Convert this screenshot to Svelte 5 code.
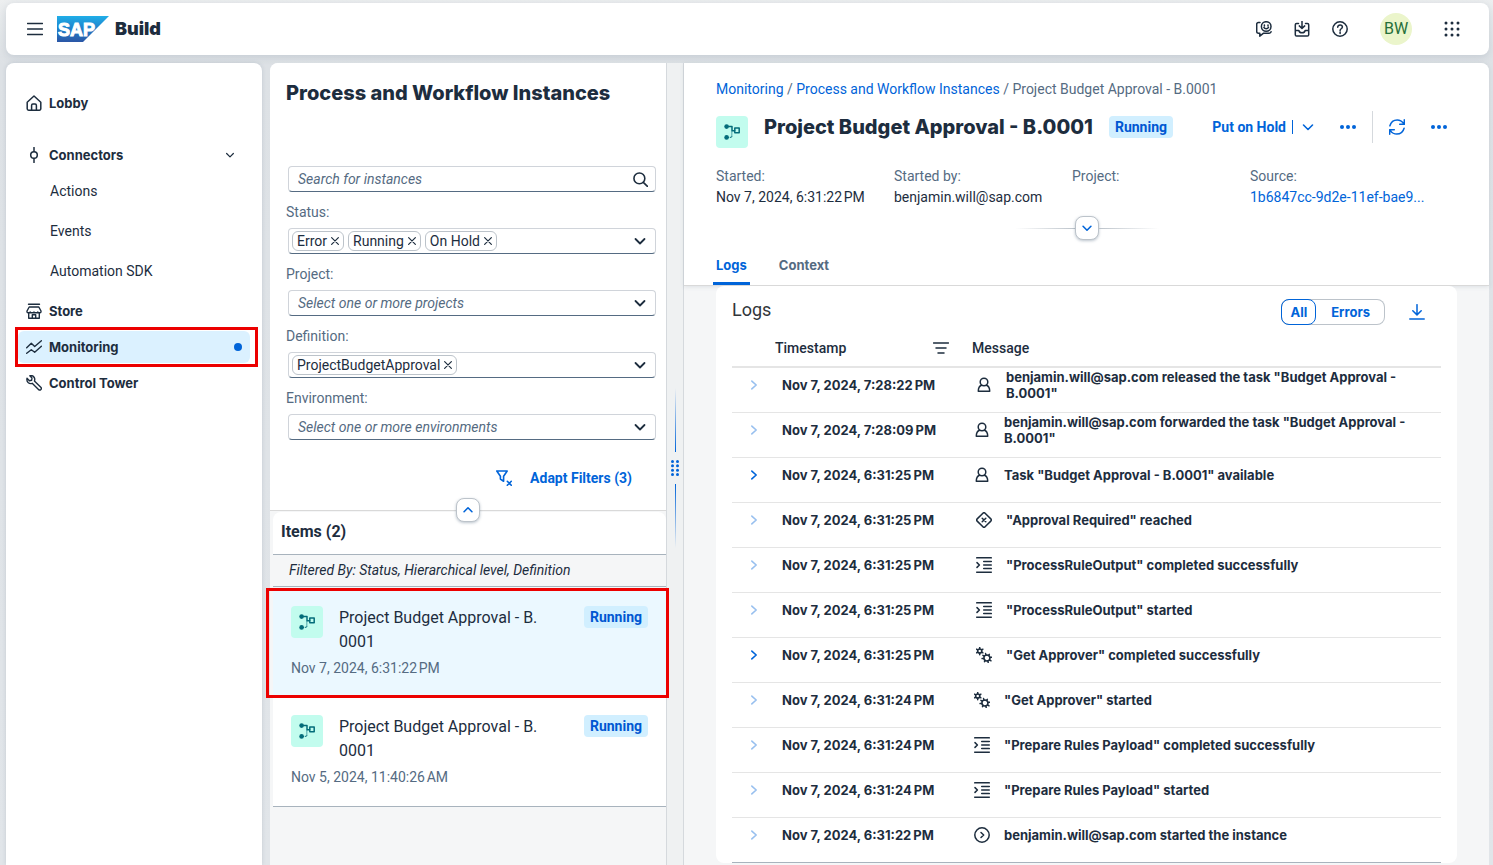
<script>
  const icons = {
    menu: '<path d="M0.5 2.5h15M0.5 8h15M0.5 13.5h15"/>',
    home: '<path d="M1.2 7.2 8 1l6.8 6.2v6.6a1.4 1.4 0 0 1-1.4 1.4H2.6a1.4 1.4 0 0 1-1.4-1.4z"/><path d="M5.6 15v-4.6c0-.8.5-1.3 1.3-1.3h2.2c.8 0 1.3.5 1.3 1.3V15"/>',
    connector: '<circle cx="8" cy="8" r="3.3"/><path d="M8 .5v4M8 11.5v4"/>',
    store: '<path d="M2.5 1.2h11M3.2 4h9.6l2.2 4v.8a1 1 0 0 1-1 1h-1.2a1 1 0 0 1-1-.8 1 1 0 0 1-1 .8H9.1a1 1 0 0 1-1.1-.8 1 1 0 0 1-1 .8H5.200a1 1 0 0 1-1-.8 1 1 0 0 1-1 .8H2a1 1 0 0 1-1-1V8zM2.700 10v5.200h10.600V10M6.300 15v-3.200h3.400V15"/>',
    monitor: '<path d="M.7 8.800 5.300 4.300l3.400 3.200L15.400 1.700M.7 14.300l4.600-3.600 3.400 2.600 6.700-6"/>',
    wrench: '<path d="M1 3.300 3.400 5.700 5.600 5.300 6 3 3.800.8C5.600.3 7.500 1 8.300 2.600c.6 1.200.6 2.300.1 3.400l6.400 6.200c.7.7.7 1.600.1 2.300-.7.700-1.700.7-2.400 0L6.200 8.300C4.800 8.900 3.300 8.600 2.100 7.500 1 6.400.7 4.800 1 3.300z"/>',
    down: '<path d="M3.500 6 8 10.500 12.500 6"/>',
    up: '<path d="M3.500 10 8 5.500 12.500 10"/>',
    right: '<path d="M5.500 3.500 10.500 8l-5 4.500"/>',
    chat: '<path d="M4 1.600H2.400c-1 0-1.700.7-1.700 1.700v7.200c0 1 .7 1.700 1.700 1.700h1.400v3l3.800-3h5.600c1 0 1.700-.6 1.900-1.500"/><circle cx="10.200" cy="5.500" r="4.800"/><path d="M7.900 6.400c.9 1.800 3.700 1.800 4.600 0M8.400 4.100v.8M12 4.100v.8"/>',
    inbox: '<path d="M4.500 2.500H2.600c-.8 0-1.300.5-1.300 1.300v10c0 .8.5 1.300 1.300 1.300h10.800c.8 0 1.300-.5 1.300-1.300v-10c0-.8-.5-1.300-1.300-1.300h-1.900M8 .3v7M5.300 4.900 8 7.500l2.700-2.600M1.500 9.500h3.300c.4 1.500 1.500 2.300 3.200 2.300s2.800-.8 3.200-2.300h3.300"/>',
    help: '<circle cx="8" cy="8" r="7.200"/><path d="M5.700 6.200c0-3.100 4.700-3 4.700-.1 0 1.700-2.300 1.600-2.300 3.300M8.100 11v1.500"/>',
    search: '<circle cx="6.800" cy="6.800" r="5.800"/><path d="m11 11 4.500 4.500"/>',
    close: '<path d="m3.500 3.500 9 9M12.500 3.500l-9 9"/>',
    filterx: '<path d="M.8 1h10.400L7.600 6.300v5L4.400 9V6.300z"/><path d="m11.300 11.300 4 4M15.300 11.300l-4 4"/>',
    sort: '<path d="M.5 3h15M3 8h10M5 13h6"/>',
    refresh: '<path d="M.9 6.800C2 2.900 4.900.9 8.200.9c2.600 0 4.800 1.200 6.400 3.500M15.100 9.200c-1.100 3.900-4 5.900-7.300 5.900-2.600 0-4.800-1.200-6.400-3.500M15.300.8v4.500h-4.600M.7 15.200v-4.500h4.600"/>',
    download: '<path d="M8 .7v9.800M3.800 6.700 8 10.900l4.200-4.200M.8 15h14.400"/>',
    person: '<circle cx="8" cy="5" r="3.800"/><path d="M5.600 8.300C3.300 9 2.300 10.800 2.300 14.300h11.400c0-3.500-1-5.300-3.300-6"/>',
    decision: '<path d="M6.900 1.200 1.200 6.900c-.7.7-.7 1.500 0 2.200l5.700 5.700c.7.7 1.500.7 2.200 0l5.700-5.700c.7-.7.700-1.500 0-2.200L9.100 1.200c-.7-.7-1.500-.7-2.200 0z"/><path d="m6.200 6.200 3.600 3.600M9.800 6.200 6.200 9.800"/>',
    script: '<path d="M.7.800h14.600M7.700 4.400h7.600M7.700 8h7.600M7.700 11.600h7.600M.7 15.200h14.600M1 5.600 3.400 8 1 10.400"/>',
    gears: '<circle cx="3.700" cy="4" r="2.100"/><path d="M3.700.3v1.600M3.700 6.100v1.600M.5 2.200l1.400.8M5.500 5l1.400.8M.5 5.800 1.900 5M5.500 3l1.400-.8" /><circle cx="10.900" cy="11" r="3"/><path d="M9.600 6.600l.4 1.600M11.800 13.800l.4 1.700M13.300 7.400l-.9 1.200M9.400 13.400l-.9 1.200M15.700 10.300l-1.700.3M7.800 11.400l-1.700.2M15 13.800l-1.500-.9M8.300 9.100 6.900 8.300"/>',
    start: '<circle cx="8" cy="8" r="7.200"/><path d="m7 5.500 2.700 2.500L7 10.500"/>',
    workflow: '<g fill="currentColor" stroke="none"><circle cx="2.600" cy="2.600" r="2.300"/><circle cx="2.600" cy="13.400" r="2.300"/></g><path d="M3 2.600h5v4.200h3M10.800 4h4.400v4.800h-4.400z"/><path d="M4 13.400h3.800V7.500" stroke-dasharray="1.200 1" stroke-linecap="butt" stroke-width="1.200"/>'
  };

  const connectors = ['Actions', 'Events', 'Automation SDK'];

  let filters = $state([
    { id: 'status', label: 'Status:', tokens: ['Error', 'Running', 'On Hold'], hint: '' },
    { id: 'project', label: 'Project:', tokens: [], hint: 'Select one or more projects' },
    { id: 'definition', label: 'Definition:', tokens: ['ProjectBudgetApproval'], hint: '' },
    { id: 'environment', label: 'Environment:', tokens: [], hint: 'Select one or more environments' }
  ]);

  const removeToken = (filter, token) => {
    filter.tokens = filter.tokens.filter((t) => t !== token);
  };

  const instances = [
    { name: ['Project Budget Approval - B.', '0001'], date: 'Nov 7, 2024, 6:31:22\u202fPM', status: 'Running' },
    { name: ['Project Budget Approval - B.', '0001'], date: 'Nov 5, 2024, 11:40:26\u202fAM', status: 'Running' }
  ];
  let selected = $state(0);

  const logs = [
    { time: '7:28:22', icon: 'person', inset: true, text: 'benjamin.will@sap.com released the task "Budget Approval - B.0001"' },
    { time: '7:28:09', icon: 'person', text: 'benjamin.will@sap.com forwarded the task "Budget Approval - B.0001"' },
    { time: '6:31:25', icon: 'person', open: true, text: 'Task "Budget Approval - B.0001" available' },
    { time: '6:31:25', icon: 'decision', inset: true, text: '"Approval Required" reached' },
    { time: '6:31:25', icon: 'script', inset: true, text: '"ProcessRuleOutput" completed successfully' },
    { time: '6:31:25', icon: 'script', inset: true, text: '"ProcessRuleOutput" started' },
    { time: '6:31:25', icon: 'gears', inset: true, open: true, text: '"Get Approver" completed successfully' },
    { time: '6:31:24', icon: 'gears', text: '"Get Approver" started' },
    { time: '6:31:24', icon: 'script', text: '"Prepare Rules Payload" completed successfully' },
    { time: '6:31:24', icon: 'script', text: '"Prepare Rules Payload" started' },
    { time: '6:31:22', icon: 'start', text: 'benjamin.will@sap.com started the instance' }
  ];
</script>

{#snippet icon(name, size = 16, weight = 1.5)}
  <svg width={size} height={size} viewBox="0 0 16 16" fill="none" stroke="currentColor" stroke-width={weight} stroke-linecap="round" stroke-linejoin="round" aria-hidden="true">{@html icons[name]}</svg>
{/snippet}

{#snippet dots()}
  <svg width="16" height="16" viewBox="0 0 16 16" fill="currentColor" aria-hidden="true"><circle cx="2" cy="8" r="2" /><circle cx="8" cy="8" r="2" /><circle cx="14" cy="8" r="2" /></svg>
{/snippet}

<div class="page">
  <header class="shell">
    <button class="plain" aria-label="Menu">{@render icon('menu', 16)}</button>
    <a class="brand" href="#home" aria-label="SAP Build">
      <svg class="logo" width="52" height="26" viewBox="0 0 52 26" aria-hidden="true">
        <defs>
          <linearGradient id="sap" x1="0" y1="0" x2="0" y2="1">
            <stop offset="0" stop-color="#20aee8" />
            <stop offset="0.5" stop-color="#1f7fca" />
            <stop offset="1" stop-color="#2b56a6" />
          </linearGradient>
        </defs>
        <path d="M0 0h52L26 26H0z" fill="url(#sap)" />
        <text x="1" y="20" class="sap">SAP</text>
      </svg>
      <span>Build</span>
    </a>
    <div class="tools">
      <button class="plain" aria-label="Feedback">{@render icon('chat')}</button>
      <button class="plain" aria-label="Inbox">{@render icon('inbox')}</button>
      <button class="plain" aria-label="Help">{@render icon('help')}</button>
    </div>
    <button class="avatar">BW</button>
    <button class="plain" aria-label="Products">
      <svg width="16" height="16" viewBox="0 0 16 16" fill="currentColor" aria-hidden="true">
        {#each [2, 8, 14] as y}{#each [2, 8, 14] as x}<circle cx={x} cy={y} r="1.500" />{/each}{/each}
      </svg>
    </button>
  </header>

  <div class="body">
    <nav class="side" aria-label="Main">
      <a class="item lobby" href="#lobby">{@render icon('home')}<span>Lobby</span></a>
      <a class="item" href="#connectors">{@render icon('connector', 16, 1.5)}<span>Connectors</span><i class="end">{@render icon('down', 12, 1.6)}</i></a>
      <div class="sub">
        {#each connectors as name}<a href="#{name}">{name}</a>{/each}
      </div>
      <a class="item" href="#store">{@render icon('store', 16, 1.4)}<span>Store</span></a>
      <a class="item current" href="#monitoring" aria-current="page">{@render icon('monitor', 16, 1.4)}<span>Monitoring</span><i class="dot"></i></a>
      <a class="item" href="#tower">{@render icon('wrench', 16, 1.4)}<span>Control Tower</span></a>
    </nav>

    <section class="master">
      <div class="filters">
        <h1>Process and Workflow Instances</h1>
        <div class="field search">
          <input type="search" aria-label="Search for instances" placeholder="Search for instances" />
          <button class="plain" aria-label="Search">{@render icon('search', 15, 1.7)}</button>
        </div>
        {#each filters as filter}
          <label for={filter.id}>{filter.label}</label>
          <div class="field">
            {#each filter.tokens as token}
              <span class="token">{token}<button class="plain" aria-label="Remove {token}" onclick={() => removeToken(filter, token)}>{@render icon('close', 12, 1.6)}</button></span>
            {/each}
            <input id={filter.id} type="text" placeholder={filter.hint} />
            <button class="plain" aria-label="Open {filter.id} list">{@render icon('down', 16, 1.8)}</button>
          </div>
        {/each}
        <div class="adapt">
          <button class="plain link" aria-label="Clear filters">{@render icon('filterx', 16, 1.6)}</button>
          <button class="plain link">Adapt Filters (3)</button>
        </div>
        <button class="fold" aria-label="Collapse header">{@render icon('up', 14, 1.8)}</button>
      </div>

      <div class="list">
        <h2>Items (2)</h2>
        <p class="info">Filtered By: Status, Hierarchical level, Definition</p>
        {#each instances as item, i}
          <button class="row" class:selected={selected === i} onclick={() => (selected = i)}>
            <span class="tile">{@render icon('workflow', 16, 1.5)}</span>
            <span class="name">{item.name[0]}<wbr />{item.name[1]}</span>
            <span class="badge">{item.status}</span>
            <span class="date">{item.date}</span>
          </button>
        {/each}
      </div>
    </section>

    <div class="splitter" role="separator" aria-orientation="vertical">
      <i class="line top"></i>
      <svg width="8" height="16" viewBox="0 0 8 16" fill="#0064d9" aria-hidden="true">
        {#each [1.500, 5.800, 10.200, 14.500] as y}<circle cx="1.500" cy={y} r="1.500" /><circle cx="6.500" cy={y} r="1.500" />{/each}
      </svg>
      <i class="line bottom"></i>
    </div>

    <main class="detail">
      <div class="head">
        <div class="crumbs"><a href="#monitoring">Monitoring</a> / <a href="#instances">Process and Workflow Instances</a> / <span>Project Budget Approval - B.0001</span></div>
        <div class="title">
          <span class="tile">{@render icon('workflow', 16, 1.5)}</span>
          <h2>Project Budget Approval - B.0001</h2>
          <span class="badge">Running</span>
          <div class="actions">
            <button class="plain link">Put on Hold</button>
            <i class="bar"></i>
            <button class="plain link" aria-label="More hold options">{@render icon('down', 16, 1.6)}</button>
            <button class="plain link more" aria-label="More actions">{@render dots()}</button>
            <i class="divider"></i>
            <button class="plain link" aria-label="Refresh">{@render icon('refresh', 16, 1.5)}</button>
            <button class="plain link more" aria-label="More">{@render dots()}</button>
          </div>
        </div>
        <dl class="facts">
          <div><dt>Started:</dt><dd>Nov 7, 2024, 6:31:22{'\u202f'}PM</dd></div>
          <div><dt>Started by:</dt><dd>benjamin.will@sap.com</dd></div>
          <div><dt>Project:</dt><dd></dd></div>
          <div><dt>Source:</dt><dd><a href="#source">1b6847cc-9d2e-11ef-bae9...</a></dd></div>
        </dl>
        <div class="expand"><i></i><button class="fold" aria-label="Expand header">{@render icon('down', 14, 1.8)}</button><i></i></div>
        <div class="tabs" role="tablist">
          <button role="tab" aria-selected="true" class="active">Logs</button>
          <button role="tab" aria-selected="false">Context</button>
        </div>
      </div>

      <section class="logs">
        <div class="bar-top">
          <h3>Logs</h3>
          <div class="segments"><button class="on">All</button><button>Errors</button></div>
          <button class="plain link" aria-label="Download">{@render icon('download', 16, 1.5)}</button>
        </div>
        <table>
          <thead>
            <tr>
              <th class="c-open"></th>
              <th class="c-time"><div>Timestamp<button class="plain" aria-label="Sort">{@render icon('sort', 16, 1.5)}</button></div></th>
              <th>Message</th>
            </tr>
          </thead>
          <tbody>
            {#each logs as log}
              <tr>
                <td><button class="plain link" disabled={!log.open} aria-label="Expand row">{@render icon('right', 14, 1.8)}</button></td>
                <td>Nov 7, 2024, {log.time}{'\u202f'}PM</td>
                <td><div class="message" class:inset={log.inset}>{@render icon(log.icon, 16, 1.5)}<span>{log.text}</span></div></td>
              </tr>
            {/each}
          </tbody>
        </table>
      </section>
    </main>
  </div>
</div>

<style>
  :global(body) {
    margin: 0;
    background: #dfe3e8;
  }
  .page {
    --ink: #1d2d3e;
    --soft: #556b82;
    --blue: #0064d9;
    --grey: #f5f6f7;
    --wide: Inter, "Open Sans", sans-serif;
    display: flex;
    flex-direction: column;
    gap: 8px;
    height: 100vh;
    box-sizing: border-box;
    padding: 3px 4px 0 6px;
    overflow: hidden;
    background: linear-gradient(#edeff0, #dde1e5 64px, #e1e5e9);
    color: var(--ink);
    font: 14px/16px Roboto, "Open Sans", sans-serif;
  }
  .page *, .page *::after {
    box-sizing: border-box;
  }
  button, input {
    font: inherit;
    color: inherit;
  }
  button {
    cursor: pointer;
  }
  svg {
    display: block;
    flex: none;
  }
  h1, h2, h3, p, dl, dd {
    margin: 0;
  }
  a {
    color: var(--blue);
    text-decoration: none;
  }
  .plain {
    display: flex;
    align-items: center;
    padding: 0;
    border: 0;
    background: none;
  }
  .link {
    color: var(--blue);
    font-weight: 700;
  }

  .shell {
    display: flex;
    align-items: center;
    flex: none;
    height: 52px;
    padding: 0 29px 0 21px;
    border-radius: 8px;
    background: #fff;
    box-shadow: 0 2px 8px rgba(85, 107, 130, 0.2);
  }
  .brand {
    display: flex;
    align-items: center;
    gap: 6px;
    margin-left: 14px;
    color: var(--ink);
    font-family: var(--wide);
    font-size: 18px;
    font-weight: 900;
    line-height: 24px;
  }
  .sap {
    fill: #fff;
    stroke: #fff;
    stroke-width: 1px;
    font: 700 18px "Liberation Sans", sans-serif;
  }
  .tools {
    display: flex;
    gap: 22px;
    margin-left: auto;
  }
  .avatar {
    width: 32px;
    height: 32px;
    margin: 0 32px;
    padding: 0;
    border: 0;
    border-radius: 50%;
    background: #ebf5cb;
    color: #256f3a;
    font-size: 16px;
  }

  .body {
    display: flex;
    flex: 1;
    min-height: 0;
  }
  .side {
    display: flex;
    flex-direction: column;
    gap: 4px;
    flex: none;
    width: 256px;
    margin-right: 8px;
    padding: 24px 12px;
    border-radius: 8px 8px 0 0;
    background: #fff;
    box-shadow: 0 0 4px rgba(85, 107, 130, 0.2);
  }
  .item {
    position: relative;
    display: flex;
    align-items: center;
    gap: 7px;
    height: 32px;
    padding: 0 8px;
    border-radius: 6px;
    color: var(--ink);
    font-family: var(--wide);
    font-size: 13px;
    font-weight: 700;
  }
  .lobby {
    margin-bottom: 16px;
  }
  .end {
    margin: 0 6px 0 auto;
  }
  .sub {
    display: flex;
    flex-direction: column;
    margin-top: -4px;
  }
  .sub a {
    padding: 12px 0 12px 32px;
    color: var(--ink);
  }
  .current {
    background: #dbf1ff;
  }
  .current::after {
    content: "";
    position: absolute;
    inset: -4px -8px -4px -3px;
    border: 3px solid #ec0000;
  }
  .dot {
    width: 8px;
    height: 8px;
    margin-left: auto;
    border-radius: 50%;
    background: var(--blue);
  }

  .master {
    flex: 0 0 397px;
    min-width: 0;
    border-right: 1px solid #d5d9dd;
    border-radius: 8px 0 0 0;
    background: var(--grey);
  }
  .filters {
    position: relative;
    display: flex;
    flex-direction: column;
    padding: 16px 10px 24px 16px;
    border-bottom: 1px solid #d9d9d9;
    border-radius: 8px 0 0 0;
    background: #fff;
  }
  h1, .title h2 {
    font-family: var(--wide);
    font-size: 20px;
    font-weight: 800;
    line-height: 28px;
    white-space: nowrap;
  }
  .field {
    display: flex;
    align-items: center;
    gap: 4px;
    height: 26px;
    margin-left: 2px;
    padding: 0 7px 0 3px;
    border: 1px solid #d0d4da;
    border-bottom-color: var(--soft);
    border-radius: 4px;
  }
  .search {
    margin-top: 59px;
  }
  .field input {
    flex: 1;
    width: 0;
    min-width: 0;
    padding: 0 6px;
    border: 0;
    outline: 0;
    background: none;
  }
  .field input::placeholder {
    color: var(--soft);
    font-style: italic;
    opacity: 1;
  }
  label {
    margin: 12px 0 8px;
    color: var(--soft);
  }
  .token {
    display: flex;
    align-items: center;
    gap: 2px;
    height: 20px;
    padding: 0 2px 0 4px;
    border: 1px solid #bcc3ca;
    border-radius: 6px;
  }
  .adapt {
    display: flex;
    justify-content: flex-end;
    gap: 18px;
    margin-top: 30px;
    padding-right: 24px;
  }
  .fold {
    display: flex;
    align-items: center;
    justify-content: center;
    flex: none;
    width: 24px;
    height: 24px;
    padding: 0;
    border: 1px solid #bcc3ca;
    border-radius: 8px;
    background: #fff;
    color: var(--blue);
    box-shadow: 0 1px 3px rgba(85, 107, 130, 0.4);
  }
  .filters .fold {
    position: absolute;
    bottom: -12px;
    left: calc(50% - 12px);
    z-index: 1;
  }
  .list {
    margin: 1px 0 0 3px;
  }
  .list h2 {
    height: 43px;
    padding: 8px;
    border-bottom: 1px solid #a8b3bd;
    border-radius: 8px 8px 0 0;
    background: #fff;
    font-size: 16px;
    line-height: 24px;
  }
  .info {
    margin-bottom: 1px;
    padding: 7px 16px 8px;
    border-bottom: 1px solid #a8b3bd;
    font-style: italic;
  }
  .row {
    position: relative;
    display: grid;
    grid-template-columns: 32px 1fr auto;
    align-content: start;
    align-items: start;
    column-gap: 16px;
    width: 100%;
    height: 109px;
    padding: 18px 18px 0;
    border: 0;
    background: #fff;
    text-align: left;
  }
  .row:last-child {
    height: 110px;
    border-bottom: 1px solid #a8b3bd;
  }
  .row.selected {
    background: #ebf8ff;
  }
  .row.selected::after {
    content: "";
    position: absolute;
    inset: 0 -3px -1px -7px;
    z-index: 1;
    border: 3px solid #ec0000;
  }
  .tile {
    display: flex;
    align-items: center;
    justify-content: center;
    flex: none;
    width: 32px;
    height: 32px;
    border-radius: 4px;
    background: #c2fcee;
    color: #046c7a;
  }
  .name {
    max-width: 220px;
    font-size: 16px;
    line-height: 24px;
  }
  .badge {
    padding: 3px 6px;
    border-radius: 4px;
    background: #d1efff;
    color: #0057d2;
    font-weight: 700;
  }
  .date {
    grid-column: 1 / -1;
    margin-top: 6px;
    color: var(--soft);
  }

  .splitter {
    display: flex;
    flex-direction: column;
    align-items: center;
    justify-content: center;
    gap: 8px;
    flex: none;
    width: 16px;
    padding-top: 8px;
    background: #eff1f2;
  }
  .line {
    width: 1px;
    height: 64px;
    background: linear-gradient(transparent, var(--blue));
  }
  .line.bottom {
    background: linear-gradient(var(--blue), transparent);
  }

  .detail {
    flex: 1;
    min-width: 0;
    border-left: 1px solid #d5d9dd;
    border-radius: 0 8px 0 0;
    background: var(--grey);
  }
  .head {
    padding: 18px 32px 0;
    border-bottom: 1px solid #d9d9d9;
    border-radius: 0 8px 0 0;
    background: #fff;
    box-shadow: 0 1px 4px rgba(85, 107, 130, 0.15);
  }
  .crumbs, .crumbs span {
    color: var(--soft);
  }
  .title {
    display: flex;
    align-items: flex-start;
    gap: 16px;
    margin-top: 14px;
  }
  .title .tile {
    margin-top: 5px;
  }
  .title .badge {
    margin-top: 5px;
  }
  .title h2 {
    margin-top: 2px;
  }
  .actions {
    display: flex;
    align-items: center;
    height: 32px;
    margin-left: auto;
    padding-right: 10px;
    white-space: nowrap;
  }
  .bar {
    width: 1px;
    height: 14px;
    margin: 0 7px 0 6px;
    background: var(--blue);
  }
  .more {
    margin-left: 24px;
  }
  .more:last-child {
    margin-left: 26px;
  }
  .divider {
    width: 1px;
    height: 32px;
    margin: 0 16px;
    background: #d5d9dd;
  }
  .facts {
    display: grid;
    grid-template-columns: repeat(4, 178px);
    margin-top: 20px;
  }
  .facts dt {
    color: var(--soft);
  }
  .facts dd {
    height: 16px;
    margin-top: 5px;
  }
  .expand {
    display: flex;
    align-items: center;
    justify-content: center;
    margin-top: 11px;
  }
  .expand i {
    width: 60px;
    height: 1px;
    background: linear-gradient(90deg, transparent, #bcc3ca);
  }
  .expand i:last-child {
    background: linear-gradient(90deg, #bcc3ca, transparent);
  }
  .tabs {
    display: flex;
    gap: 26px;
    margin-left: -3px;
  }
  .tabs button {
    height: 45px;
    padding: 7px 3px 0;
    border: 0;
    border-bottom: 3px solid transparent;
    background: none;
    color: var(--soft);
    font-family: var(--wide);
    font-size: 13px;
    font-weight: 700;
  }
  .tabs .active {
    border-color: var(--blue);
    color: var(--blue);
  }

  .logs {
    margin: 0 32px;
    padding: 13px 16px 0;
    border-radius: 8px;
    background: #fff;
  }
  .bar-top {
    display: flex;
    align-items: center;
    gap: 24px;
    padding-right: 16px;
  }
  h3 {
    flex: 1;
    padding-bottom: 4px;
    color: #32363a;
    font-size: 18px;
    font-weight: 400;
    line-height: 20px;
  }
  .segments {
    display: flex;
    height: 26px;
    border-radius: 8px;
    box-shadow: inset 0 0 0 1px #bcc3ca;
  }
  .segments button {
    padding: 0 14px;
    border: 1px solid transparent;
    border-radius: 8px;
    background: none;
    color: var(--blue);
    font-family: var(--wide);
    font-size: 13px;
    font-weight: 700;
  }
  .segments .on {
    padding: 0 8px;
    border-color: var(--blue);
  }
  table {
    width: 100%;
    border-collapse: collapse;
    table-layout: fixed;
  }
  th {
    height: 42px;
    padding: 4px 0 0 8px;
    border-bottom: 2px solid #e5e5e5;
    font-weight: 500;
    text-align: left;
  }
  .c-open {
    width: 42px;
  }
  .c-time {
    width: 190px;
    padding: 4px 15px 0 1px;
  }
  .c-time div {
    display: flex;
    justify-content: space-between;
  }
  td {
    height: 45px;
    padding: 0 0 10px 8px;
    border-bottom: 1px solid #e5e5e5;
    font-family: var(--wide);
    font-size: 13px;
    font-weight: 700;
  }
  td:first-child {
    padding-left: 15px;
  }
  tr:last-child td {
    border-bottom-color: #a8b3bd;
  }
  td .link:disabled {
    opacity: 0.4;
  }
  .message {
    display: flex;
    align-items: center;
    gap: 14px;
    padding-left: 2px;
  }
  .message.inset {
    padding-left: 4px;
  }
</style>
